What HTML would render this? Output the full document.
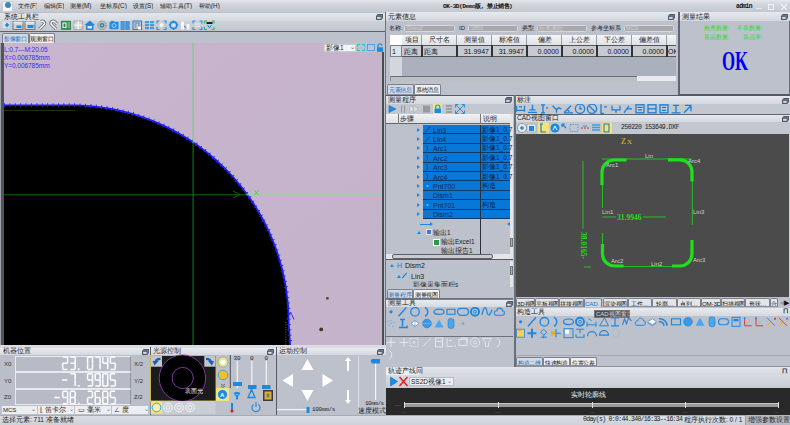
<!DOCTYPE html>
<html><head><meta charset="utf-8">
<style>
*{box-sizing:border-box;margin:0;padding:0}
html,body{width:790px;height:425px;overflow:hidden}
body{position:relative;background:#bcc1cc;font-family:"Liberation Sans",sans-serif;font-size:7px;color:#111}
.a{position:absolute}
.tb{position:absolute;background:linear-gradient(#eceef2,#d3d7de);font-size:7px;line-height:8px;padding-left:3px;color:#222;white-space:nowrap;overflow:hidden}
.pn{position:absolute;background:#bcc1cc}
.dk{position:absolute;background:#5a5f6b}
.t{position:absolute;white-space:nowrap;line-height:1}
.tab{position:absolute;background:#dfe2e8;border:1px solid #7c818c;border-bottom:none;font-size:6.2px;line-height:9px;text-align:center;color:#111;letter-spacing:-0.2px;border-radius:2px 2px 0 0;white-space:nowrap;overflow:hidden}
.tab.on{background:#d5dae1 !important;color:#1a6fc4}
.ic{position:absolute;width:9px;height:9px}
</style></head><body>

<!-- ===== MENU BAR ===== -->
<div class="a" style="left:0;top:0;width:790px;height:12px;background:linear-gradient(#e3e6eb 0%,#d0d4db 40%,#c3c7cf 100%)"></div>
<div class="a" style="left:2px;top:1px;width:11px;height:11px;background:#f4f6f8;border:1px solid #c9ced6"></div>
<div class="a" style="left:5px;top:2px;width:6px;height:6px;border-radius:3px;background:#3d86b8"></div>
<div class="t" style="left:18px;top:3px;width:19px;font-size:6.3px;color:#222;overflow:hidden">文件(F)</div><div class="t" style="left:44px;top:3px;width:20px;font-size:6.3px;color:#222;overflow:hidden">编辑(E)</div><div class="t" style="left:70px;top:3px;width:25px;font-size:6.3px;color:#222;overflow:hidden">测量(M)</div><div class="t" style="left:100px;top:3px;width:27px;font-size:6.3px;color:#222;overflow:hidden">坐标系(C)</div><div class="t" style="left:133px;top:3px;width:20px;font-size:6.3px;color:#222;overflow:hidden">设置(S)</div><div class="t" style="left:160px;top:3px;width:33px;font-size:6.3px;color:#222;overflow:hidden">辅助工具(T)</div><div class="t" style="left:199px;top:3px;width:21px;font-size:6.3px;color:#222;overflow:hidden">帮助(H)</div>
<div class="t" style="left:443px;top:3.5px;font-size:6.2px;color:#111;font-family:'Liberation Mono',monospace;font-weight:bold;letter-spacing:-0.5px">OK-3D(Demo版, 禁止销售)</div>
<div class="t" style="left:736px;top:3.5px;font-size:6.3px;color:#111;font-family:'Liberation Mono',monospace;font-weight:bold;letter-spacing:-0.6px">admin</div>
<div class="a" style="left:755.5px;top:8px;width:6px;height:1px;background:#e8eaee"></div>
<div class="a" style="left:768px;top:4px;width:6px;height:5.5px;border:1px solid #f0f2f4;border-top-width:1.5px"></div>
<svg class="a" style="left:780px;top:3px" width="8" height="8"><path d="M1,1 L7,7 M7,1 L1,7" stroke="#f0f2f4" stroke-width="1.2"/></svg>


<!-- ===== LEFT PANEL ===== -->
<div class="a" style="left:0;top:12.5px;width:386px;height:8.5px;background:linear-gradient(#e3e6ea,#d6d9df)"></div><div class="a" style="left:0;top:21px;width:386px;height:10.5px;background:linear-gradient(#cdd1d8,#c1c5cd)"></div>
<div class="t" style="left:4px;top:13px;font-size:7px;color:#222">系统工具栏</div>
<svg class="a" style="left:376.0px;top:14.0px" width="7" height="6" viewBox="0 0 7 6"><path d="M1.8,1.2 V0.6 H6.4 V4 H5.6" fill="none" stroke="#4a5566" stroke-width="1.1"/><rect x="0.6" y="2" width="4.6" height="3.4" fill="none" stroke="#4a5566" stroke-width="1.1"/><rect x="0.6" y="1.6" width="4.6" height="1" fill="#4a5566"/></svg>

<svg class="a" style="left:0;top:19px" width="220" height="12" viewBox="0 19 220 12">
<rect x="2" y="21" width="8" height="7.5" fill="#dde0e6" stroke="#b8bcc4" stroke-width="0.5"/><path d="M7,22.5 l2.2,2.5 l-2.2,2.5 l-2.2,-2.5z" fill="#1e88e0"/>
<rect x="13" y="21.5" width="10" height="8" fill="#cfd3da" stroke="#5a606a" stroke-width="0.8"/><rect x="13.5" y="21.5" width="9" height="2" fill="#e6e8ec"/><rect x="16.5" y="25.5" width="5" height="2.5" fill="#1e88e0"/>
<rect x="25" y="21.5" width="10" height="8" fill="#cfd3da" stroke="#5a606a" stroke-width="0.8"/><rect x="25.5" y="21.5" width="9" height="2" fill="#e6e8ec"/><rect x="27.5" y="25" width="6" height="3" fill="#1e88e0"/>
<path d="M39.5,29 L44.5,24 A2.3,2.3 0 0 0 41,21.5" fill="none" stroke="#5a5f68" stroke-width="3"/><path d="M39.5,29 L44.5,24 A2.3,2.3 0 0 0 41,21.5" fill="none" stroke="#f2f4f6" stroke-width="1.6"/>
<path d="M56,29 L51,24 A2.3,2.3 0 0 1 54.5,21.5 L57,24" fill="none" stroke="#5a5f68" stroke-width="3"/><path d="M56,29 L51,24 A2.3,2.3 0 0 1 54.5,21.5 L57,24" fill="none" stroke="#f2f4f6" stroke-width="1.6"/>
<rect x="61" y="20.8" width="10" height="9" fill="#2a8a4a"/><rect x="62.5" y="22.5" width="4" height="5.5" fill="#fff"/><rect x="63.5" y="23.5" width="2" height="3.5" fill="#2a8a4a"/><path d="M67.5,23 h2.5 M67.5,25 h2.5 M67.5,27 h2.5" stroke="#cfe8d8" stroke-width="0.8"/>
<rect x="74" y="21" width="8.5" height="8.5" fill="#d0d4da" stroke="#8a8f98" stroke-width="0.6"/><path d="M78.2,21 v8.5 M74,25.2 h8.5" stroke="#fff" stroke-width="1"/>
<path d="M89.8,20.5 L95,25 L93.5,25 L93.5,30 L86,30 L86,25 L84.6,25 Z" fill="#1e88e0"/><rect x="87.5" y="26" width="4.5" height="2.5" fill="#dbe8f5"/>
<circle cx="102" cy="25.3" r="4.3" fill="#b9bdc4" stroke="#6c7078" stroke-width="0.8" stroke-dasharray="1.2 0.8"/><circle cx="102" cy="25.3" r="2.4" fill="#3c8a98"/><circle cx="102" cy="25.3" r="0.8" fill="#ddd"/>
<rect x="109.5" y="21.8" width="9" height="7.4" rx="0.8" fill="#1e8cf0"/><rect x="111" y="20.9" width="3" height="1.5" fill="#1e8cf0"/><circle cx="114" cy="25.5" r="2" fill="none" stroke="#cfe6fb" stroke-width="0.8"/>
<g fill="#3e9ae0"><rect x="120.5" y="21" width="4" height="4"/><rect x="125.8" y="21" width="4" height="4"/><rect x="120.5" y="26" width="4" height="4"/><rect x="125.8" y="26" width="4" height="4"/></g><path d="M125.2,21 v9 M120.5,25.5 h9" stroke="#5a606a" stroke-width="0.6"/>
<rect x="133" y="21" width="8.5" height="8.5" fill="none" stroke="#2a78c8" stroke-width="1"/><path d="M134.5,23 h5.5 M134.5,25 h2 M138,25 h2 M134.5,27 h2" stroke="#2a78c8" stroke-width="0.9"/><rect x="138" y="27" width="3" height="2.5" fill="#fff"/>
<g fill="#4a9ad8"><rect x="145" y="21" width="4" height="2.2"/><rect x="150" y="21" width="4" height="2.2"/><rect x="145" y="24" width="4" height="2.2"/><rect x="150" y="24" width="4" height="2.2"/><rect x="145" y="27" width="4" height="2.2"/><rect x="150" y="27" width="4" height="2.2"/></g>
<path d="M157,23.5 v-2.5 h2.5 M163.5,21 h2.5 v2.5 M166,27 v2.5 h-2.5 M159.5,29.5 h-2.5 v-2.5" fill="none" stroke="#2a90e0" stroke-width="1.1"/><path d="M161.5,22.8 l2.2,2.4 l-2.2,2.4 l-2.2,-2.4z" fill="#fff"/>
<circle cx="173.5" cy="25.2" r="3.3" fill="none" stroke="#1e88e0" stroke-width="1.6"/><path d="M173.5,20.5 v2 M173.5,28 v2 M168.8,25.2 h2 M176.3,25.2 h2" stroke="#1e88e0" stroke-width="1.3"/><circle cx="173.5" cy="25.2" r="1" fill="#fff"/>
<rect x="181" y="21.5" width="3" height="8" fill="#f6f6f6"/><rect x="186.5" y="24" width="3" height="5.5" fill="#f6f6f6"/><path d="M184,26 l2.5,2" stroke="#2a60a0" stroke-width="0.8"/>
<path d="M193,23.5 v-2.5 h2.5 M199.5,21 h2.5 v2.5 M202,27 v2.5 h-2.5 M195.5,29.5 h-2.5 v-2.5" fill="none" stroke="#2a90e0" stroke-width="1.1"/><path d="M195,24 h5 M195,26.5 h5" stroke="#e8eef6" stroke-width="1"/>
<path d="M204.5,23.5 v-2.5 h2.5 M211.5,21 h2.5 v2.5 M214,27 v2.5 h-2.5 M207,29.5 h-2.5 v-2.5" fill="none" stroke="#22c060" stroke-width="1.1"/><rect x="206.5" y="22" width="6" height="2" fill="#222"/><path d="M207.5,25 l2,3 l2,-3" fill="none" stroke="#1e88e0" stroke-width="1"/>
</svg>
<div class="a" style="left:0;top:31px;width:386px;height:1.3px;background:#5d626d"></div>
<div class="a" style="left:0;top:32px;width:386px;height:11px;background:#bcc1cc"></div>
<div class="tab on" style="left:2px;top:33px;width:27px;height:10px">影像窗口</div>
<div class="tab" style="left:29px;top:33px;width:26px;height:10px;background:#eef0f3">观测窗口</div>
<!-- image -->
<div class="a" style="left:0;top:43px;width:4px;height:303px;background:#9da2ad"></div>
<div class="a" style="left:1px;top:43px;width:3px;height:303px;background:#505560"></div>
<svg class="a" style="left:4px;top:43px" width="378" height="302" viewBox="4 43 378 302">
<defs><linearGradient id="pk" x1="0" y1="0" x2="1" y2="1"><stop offset="0" stop-color="#c9b5cd"/><stop offset="1" stop-color="#c3b3cb"/></linearGradient></defs>
<rect x="4" y="43" width="378" height="302" fill="url(#pk)"/>
<path d="M4,105.8 L72.1,105.8 A216.2,216.2 0 0 1 288.3,322 L289.8,345 L4,345 Z" fill="#000"/>
<path d="M4,105.3 L72.1,105.3 A216.65,216.65 0 0 1 288.75,322 L290.2,345" fill="none" stroke="#1a1aff" stroke-width="1.6"/>
<path d="M4,105.3 L72.1,105.3 A216.65,216.65 0 0 1 288.75,322 L290.2,345" fill="none" stroke="#2020f0" stroke-width="4" stroke-dasharray="0.9 4.5"/>
<path d="M4,110.5 L75,110.5" stroke="#2a3a10" stroke-width="0.8"/>
<line x1="193.1" y1="43" x2="193.1" y2="143" stroke="#70d070" stroke-width="1"/><line x1="193.1" y1="143" x2="193.1" y2="345" stroke="#0a8a0a" stroke-width="1"/>
<line x1="4" y1="194.8" x2="246" y2="194.8" stroke="#0a7a0a" stroke-width="0.9"/>
<line x1="246" y1="194.8" x2="382" y2="194.8" stroke="#96d896" stroke-width="0.9"/>
<path d="M233,191 L240,194.5 L233,198" fill="none" stroke="#0c7a0c" stroke-width="0.8"/>
<path d="M254.5,190.5 L258.5,195 M258.5,190.5 L254.5,195" stroke="#40d040" stroke-width="0.9"/>
<circle cx="327.4" cy="298.3" r="1.4" fill="#4a4a28"/>
<circle cx="321.2" cy="329.4" r="1.9" fill="#3a3a20"/>
<path d="M287,319.5 L290.5,312 L294,319.5" fill="none" stroke="#2020f0" stroke-width="0.9"/>
<line x1="285.9" y1="322" x2="285.9" y2="345" stroke="#5a6a50" stroke-width="0.8" stroke-dasharray="1.2 1.2"/>
</svg>
<div class="t" style="left:4px;top:45.5px;font-size:6.6px;color:#3030f0;line-height:8.2px;letter-spacing:-0.1px">L:0.7---M:20.05<br>X=0.006785mm<br>Y=0.006785mm</div>
<div class="a" style="left:323px;top:43px;width:61px;height:9px;background:#bcc1cc"></div>
<div class="a" style="left:324px;top:43.5px;width:32px;height:8px;background:#f2f3f5;border:1px solid #c8ccd3"></div>
<div class="t" style="left:326px;top:44.5px;font-size:6.5px;color:#222">影像1</div>
<div class="t" style="left:350px;top:44px;font-size:6px;color:#555">⌄</div>
<div class="a" style="left:357px;top:44px;width:8px;height:7px;border:1px dashed #2cc0f0"></div>
<div class="a" style="left:367px;top:44px;width:8px;height:7px;border:1px solid #5ba0d8;background:#b9c8d8"></div>
<svg class="a" style="left:376px;top:43px" width="8" height="9"><path d="M2,4.5 V2.8 A2,2 0 0 1 6,2.8" fill="none" stroke="#1e88e0" stroke-width="1.2"/><rect x="1" y="4.3" width="6" height="4.5" fill="#1e88e0"/></svg>
<div class="a" style="left:382px;top:52px;width:2px;height:293px;background:#484c55"></div>
<div class="a" style="left:384px;top:32px;width:2px;height:314px;background:#bcc1cc"></div>
<div class="a" style="left:385px;top:12px;width:1px;height:334px;background:#6d727d"></div>


<!-- ===== CENTER TOP: element info ===== -->
<div class="a" style="left:386px;top:12px;width:292px;height:9px;background:linear-gradient(#e6e9ee,#d3d7de)"></div>
<div class="t" style="left:388px;top:13px;font-size:7px;color:#222">元素信息</div>
<div class="t" style="left:389px;top:25px;font-size:6px;color:#222">名称:</div>
<div class="a" style="left:404px;top:24.5px;width:51px;height:7.5px;background:#a8aab0;border:1px solid #d5d7db;border-radius:1.5px"></div><div class="t" style="left:407px;top:25.8px;font-size:5.5px;color:#cfd1d4">Dism2</div>
<div class="t" style="left:459px;top:25px;font-size:6px;color:#222">ID</div>
<div class="a" style="left:468px;top:24.5px;width:50px;height:7.5px;background:#a8aab0;border:1px solid #d5d7db;border-radius:1.5px"></div><div class="t" style="left:471px;top:25.8px;font-size:5.5px;color:#cfd1d4">2850</div>
<div class="t" style="left:522px;top:25px;font-size:6px;color:#222">类型</div>
<div class="a" style="left:536.5px;top:24.5px;width:50.5px;height:7.5px;background:#a8aab0;border:1px solid #d5d7db;border-radius:1.5px"></div><div class="t" style="left:539px;top:25.8px;font-size:5.5px;color:#cfd1d4">距离测距</div>
<div class="t" style="left:591px;top:25px;font-size:6px;color:#222">参考坐标系</div>
<div class="a" style="left:623.7px;top:24.5px;width:50.6px;height:7.5px;background:#a8aab0;border:1px solid #d5d7db;border-radius:1.5px"></div><div class="t" style="left:626px;top:25.8px;font-size:5.5px;color:#cfd1d4">MCS</div>
<!-- table -->
<div class="a" style="left:390px;top:35px;width:286px;height:45px;background:#aab0bd"></div>
<div class="a" style="left:390px;top:35px;width:12px;height:10px;background:#fff"></div>
<div class="a" style="left:390px;top:45px;width:12px;height:12px;background:#dfe2e8;border:1px solid #7a7f8a"></div>
<div class="t" style="left:392px;top:48px;font-size:7px">1</div>
<div class="a" style="left:402px;top:35px;width:274px;height:10px;background:linear-gradient(#f3f4f6,#dfe2e7)"></div>
<div class="a" style="left:402px;top:45px;width:274px;height:12px;background:#c6cad3;border-top:1px solid #555;border-bottom:1px solid #555"></div>
<div class="a" style="left:390px;top:57px;width:12px;height:19px;background:#d3d6dc"></div>
<div class="a" style="left:390px;top:76px;width:286px;height:5px;background:#e8eaee"></div>
<div class="a" style="left:390px;top:76px;width:247px;height:4.5px;background:#bdbfc2;border-top:1px solid #6a6e76;border-left:1px solid #8a8e96"></div>
<div class="a" style="left:421px;top:35px;width:1px;height:10px;background:#9aa0aa"></div><div class="t" style="left:402px;top:37px;width:20px;text-align:center;font-size:6.5px;color:#222">项目</div><div class="a" style="left:421px;top:45px;width:1.5px;height:12px;background:#333"></div><div class="t" style="left:404px;top:48px;font-size:7px;color:#111">距离</div><div class="a" style="left:456px;top:35px;width:1px;height:10px;background:#9aa0aa"></div><div class="t" style="left:422px;top:37px;width:35px;text-align:center;font-size:6.5px;color:#222">尺寸名</div><div class="a" style="left:456px;top:45px;width:1.5px;height:12px;background:#333"></div><div class="t" style="left:424px;top:48px;font-size:7px;color:#111">距离</div><div class="a" style="left:491px;top:35px;width:1px;height:10px;background:#9aa0aa"></div><div class="t" style="left:457px;top:37px;width:35px;text-align:center;font-size:6.5px;color:#222">测量值</div><div class="a" style="left:491px;top:45px;width:1.5px;height:12px;background:#333"></div><div class="t" style="left:457px;top:48px;width:32px;text-align:right;font-size:7px;color:#111">31.9947</div><div class="a" style="left:526px;top:35px;width:1px;height:10px;background:#9aa0aa"></div><div class="t" style="left:492px;top:37px;width:35px;text-align:center;font-size:6.5px;color:#222">标准值</div><div class="a" style="left:526px;top:45px;width:1.5px;height:12px;background:#333"></div><div class="t" style="left:492px;top:48px;width:32px;text-align:right;font-size:7px;color:#111">31.9947</div><div class="a" style="left:561px;top:35px;width:1px;height:10px;background:#9aa0aa"></div><div class="t" style="left:527px;top:37px;width:35px;text-align:center;font-size:6.5px;color:#222">偏差</div><div class="a" style="left:561px;top:45px;width:1.5px;height:12px;background:#333"></div><div class="t" style="left:527px;top:48px;width:32px;text-align:right;font-size:7px;color:#111">0.0000</div><div class="a" style="left:596px;top:35px;width:1px;height:10px;background:#9aa0aa"></div><div class="t" style="left:562px;top:37px;width:35px;text-align:center;font-size:6.5px;color:#222">上公差</div><div class="a" style="left:596px;top:45px;width:1.5px;height:12px;background:#333"></div><div class="t" style="left:562px;top:48px;width:32px;text-align:right;font-size:7px;color:#111">0.0000</div><div class="a" style="left:631px;top:35px;width:1px;height:10px;background:#9aa0aa"></div><div class="t" style="left:597px;top:37px;width:35px;text-align:center;font-size:6.5px;color:#222">下公差</div><div class="a" style="left:631px;top:45px;width:1.5px;height:12px;background:#333"></div><div class="t" style="left:597px;top:48px;width:32px;text-align:right;font-size:7px;color:#111">0.0000</div><div class="a" style="left:666px;top:35px;width:1px;height:10px;background:#9aa0aa"></div><div class="t" style="left:632px;top:37px;width:35px;text-align:center;font-size:6.5px;color:#222">偏差值</div><div class="a" style="left:666px;top:45px;width:1.5px;height:12px;background:#333"></div><div class="t" style="left:632px;top:48px;width:32px;text-align:right;font-size:7px;color:#111">0.0000</div><div class="a" style="left:699px;top:35px;width:1px;height:10px;background:#9aa0aa"></div><div class="t" style="left:667px;top:37px;width:33px;text-align:center;font-size:6.5px;color:#222">结果</div><div class="a" style="left:699px;top:45px;width:1.5px;height:12px;background:#333"></div><div class="t" style="left:668px;top:48px;font-size:7px;color:#111">OK</div>
<div class="a" style="left:676px;top:21px;width:4px;height:73px;background:#bcc1cc"></div>
<div class="a" style="left:678px;top:12px;width:1.5px;height:82px;background:#5f6470"></div>
<svg class="a" style="left:668.0px;top:14.0px" width="7" height="6" viewBox="0 0 7 6"><path d="M1.8,1.2 V0.6 H6.4 V4 H5.6" fill="none" stroke="#4a5566" stroke-width="1.1"/><rect x="0.6" y="2" width="4.6" height="3.4" fill="none" stroke="#4a5566" stroke-width="1.1"/><rect x="0.6" y="1.6" width="4.6" height="1" fill="#4a5566"/></svg>
<!-- result panel -->
<div class="a" style="left:679.5px;top:21px;width:110.5px;height:73px;background:#bcc1cc"></div>
<div class="a" style="left:680px;top:12px;width:110px;height:9px;background:linear-gradient(#e6e9ee,#d3d7de)"></div>
<div class="t" style="left:682px;top:13px;font-size:7px;color:#222">测量结果</div>
<svg class="a" style="left:781.0px;top:14.0px" width="7" height="6" viewBox="0 0 7 6"><path d="M1.8,1.2 V0.6 H6.4 V4 H5.6" fill="none" stroke="#4a5566" stroke-width="1.1"/><rect x="0.6" y="2" width="4.6" height="3.4" fill="none" stroke="#4a5566" stroke-width="1.1"/><rect x="0.6" y="1.6" width="4.6" height="1" fill="#4a5566"/></svg>
<div class="t" style="left:703.5px;top:25px;font-size:6.2px;color:#20e020">检查数量:</div><div class="t" style="left:737px;top:25px;font-size:6.2px;color:#20e020">不良数量:</div>
<div class="t" style="left:703.5px;top:34px;font-size:6.2px;color:#20e020">良品数量:</div><div class="t" style="left:743px;top:34px;font-size:6.2px;color:#20e020">良品率:</div>
<div class="t" style="left:721.5px;top:46.5px;font-size:28px;color:#0000ee;font-family:'Liberation Serif',serif;font-weight:bold;transform:scaleX(0.6);transform-origin:left top">OK</div>
<div class="a" style="left:788.5px;top:21px;width:1.5px;height:73px;background:#6a6f7a"></div>
<div class="a" style="left:386px;top:93.5px;width:404px;height:1.5px;background:#555a66"></div>
<!-- tabs element info/system msg -->
<div class="a" style="left:386px;top:81px;width:292px;height:14px;background:#bcc1cc"></div>
<div class="tab on" style="left:387px;top:84px;width:27px;height:10.5px;border-bottom:1px solid #8c919c">元素信息</div>
<div class="tab" style="left:414px;top:84px;width:27px;height:10.5px;background:#eef0f3;border-bottom:1px solid #8c919c">系统消息</div>


<!-- ===== MEASUREMENT PROGRAM ===== -->
<div class="a" style="left:386px;top:95px;width:127px;height:9px;background:linear-gradient(#e6e9ee,#d3d7de)"></div>
<div class="t" style="left:388px;top:96px;font-size:7px;color:#222">测量程序</div>
<svg class="a" style="left:505.0px;top:97.0px" width="7" height="6" viewBox="0 0 7 6"><path d="M1.8,1.2 V0.6 H6.4 V4 H5.6" fill="none" stroke="#4a5566" stroke-width="1.1"/><rect x="0.6" y="2" width="4.6" height="3.4" fill="none" stroke="#4a5566" stroke-width="1.1"/><rect x="0.6" y="1.6" width="4.6" height="1" fill="#4a5566"/></svg>
<div class="a" style="left:386px;top:104px;width:127px;height:10px;background:#c3c7d0"></div>
<svg class="a" style="left:386px;top:104px" width="127" height="10" viewBox="386 104 127 10">
<path d="M389,105.5 L396,109 L389,112.5 Z" fill="#1a8de8" stroke="#0d6ab8" stroke-width="0.5"/>
<rect x="401" y="105.5" width="1.2" height="7" fill="#999"/><rect x="404" y="105.5" width="1.2" height="7" fill="#999"/>
<path d="M410,105.5 L414,109 L410,112.5Z M414,105.5 L418,109 L414,112.5Z" fill="#e4e6ea" stroke="#999" stroke-width="0.4"/>
<rect x="423" y="105.5" width="7" height="7" fill="#999"/>
<rect x="433" y="104" width="9" height="10" fill="#f4e27a"/>
<rect x="434.5" y="108.5" width="6.5" height="4.5" fill="#1e8ae6"/><path d="M435.8,108.5 V107 A2,2 0 0 1 439.8,107 V108.5" fill="none" stroke="#1e8ae6" stroke-width="1.2"/>
<path d="M446,106 H452 M446,109 H452 M446,112 H452" stroke="#777" stroke-width="1"/>
<path d="M455.5,107.5 v-3 h3 M461.5,104.5 h3 v3 M464.5,110.5 v3 h-3 M458.5,113.5 h-3 v-3 M456,105 L464,113 M464,105 L456,113" fill="none" stroke="#2a90d8" stroke-width="1"/>
</svg>
<div class="a" style="left:386px;top:114px;width:127px;height:146px;background:#bcc1cc"></div>
<div class="a" style="left:386px;top:114px;width:124px;height:10px;background:linear-gradient(#f1f2f4,#dcdfe5);border-bottom:1px solid #666"></div>
<div class="a" style="left:397.5px;top:114px;width:1px;height:10px;background:#777"></div>
<div class="a" style="left:480px;top:114px;width:1px;height:10px;background:#777"></div>
<div class="t" style="left:400px;top:116px;font-size:6.5px;color:#222">步骤</div>
<div class="t" style="left:483px;top:116px;font-size:6.5px;color:#222">说明</div>
<div class="a" style="left:510px;top:114px;width:3px;height:146px;background:#e3e5e9"></div>
<div class="a" style="left:510.3px;top:238px;width:2.5px;height:9px;background:#a8acb4;border:0.5px solid #777"></div>
<div class="a" style="left:422.8px;top:125.0px;width:87.2px;height:9.4px;background:#0878d8;border-bottom:1px solid #0c3c6c"></div><div class="t" style="left:433px;top:126.5px;font-size:7px;color:#0a2a55">Lin3</div><div class="t" style="left:482px;top:126.5px;font-size:6.5px;color:#0a2040">影像1_0.7</div><div class="a" style="left:417px;top:127.5px;width:0;height:0;border-left:3.5px solid #1a8ae8;border-top:2.5px solid transparent;border-bottom:2.5px solid transparent"></div><div class="a" style="left:422.8px;top:134.4px;width:87.2px;height:9.4px;background:#0878d8;border-bottom:1px solid #0c3c6c"></div><div class="t" style="left:433px;top:135.9px;font-size:7px;color:#0a2a55">Lin4</div><div class="t" style="left:482px;top:135.9px;font-size:6.5px;color:#0a2040">影像1_0.7</div><div class="a" style="left:417px;top:136.9px;width:0;height:0;border-left:3.5px solid #1a8ae8;border-top:2.5px solid transparent;border-bottom:2.5px solid transparent"></div><div class="a" style="left:422.8px;top:143.8px;width:87.2px;height:9.4px;background:#0878d8;border-bottom:1px solid #0c3c6c"></div><div class="t" style="left:433px;top:145.3px;font-size:7px;color:#0a2a55">Arc1</div><div class="t" style="left:482px;top:145.3px;font-size:6.5px;color:#0a2040">影像1_0.7</div><div class="a" style="left:417px;top:146.3px;width:0;height:0;border-left:3.5px solid #1a8ae8;border-top:2.5px solid transparent;border-bottom:2.5px solid transparent"></div><div class="a" style="left:422.8px;top:153.2px;width:87.2px;height:9.4px;background:#0878d8;border-bottom:1px solid #0c3c6c"></div><div class="t" style="left:433px;top:154.7px;font-size:7px;color:#0a2a55">Arc2</div><div class="t" style="left:482px;top:154.7px;font-size:6.5px;color:#0a2040">影像1_0.7</div><div class="a" style="left:417px;top:155.7px;width:0;height:0;border-left:3.5px solid #1a8ae8;border-top:2.5px solid transparent;border-bottom:2.5px solid transparent"></div><div class="a" style="left:422.8px;top:162.6px;width:87.2px;height:9.4px;background:#0878d8;border-bottom:1px solid #0c3c6c"></div><div class="t" style="left:433px;top:164.1px;font-size:7px;color:#0a2a55">Arc3</div><div class="t" style="left:482px;top:164.1px;font-size:6.5px;color:#0a2040">影像1_0.7</div><div class="a" style="left:417px;top:165.1px;width:0;height:0;border-left:3.5px solid #1a8ae8;border-top:2.5px solid transparent;border-bottom:2.5px solid transparent"></div><div class="a" style="left:422.8px;top:172.0px;width:87.2px;height:9.4px;background:#0878d8;border-bottom:1px solid #0c3c6c"></div><div class="t" style="left:433px;top:173.5px;font-size:7px;color:#0a2a55">Arc4</div><div class="t" style="left:482px;top:173.5px;font-size:6.5px;color:#0a2040">影像1_0.7</div><div class="a" style="left:417px;top:174.5px;width:0;height:0;border-left:3.5px solid #1a8ae8;border-top:2.5px solid transparent;border-bottom:2.5px solid transparent"></div><div class="a" style="left:422.8px;top:181.4px;width:87.2px;height:9.4px;background:#0878d8;border-bottom:1px solid #0c3c6c"></div><div class="t" style="left:433px;top:182.9px;font-size:7px;color:#0a2a55">Pnt700</div><div class="t" style="left:482px;top:182.9px;font-size:6.5px;color:#0a2040">构造</div><div class="a" style="left:417px;top:183.9px;width:0;height:0;border-left:3.5px solid #1a8ae8;border-top:2.5px solid transparent;border-bottom:2.5px solid transparent"></div><div class="a" style="left:422.8px;top:190.8px;width:87.2px;height:9.4px;background:#0878d8;border-bottom:1px solid #0c3c6c"></div><div class="t" style="left:433px;top:192.3px;font-size:7px;color:#0a2a55">Dism1</div><div class="a" style="left:417px;top:193.3px;width:0;height:0;border-left:3.5px solid #1a8ae8;border-top:2.5px solid transparent;border-bottom:2.5px solid transparent"></div><div class="a" style="left:422.8px;top:200.2px;width:87.2px;height:9.4px;background:#0878d8;border-bottom:1px solid #0c3c6c"></div><div class="t" style="left:433px;top:201.7px;font-size:7px;color:#0a2a55">Pnt701</div><div class="t" style="left:482px;top:201.7px;font-size:6.5px;color:#0a2040">构造</div><div class="a" style="left:417px;top:202.7px;width:0;height:0;border-left:3.5px solid #1a8ae8;border-top:2.5px solid transparent;border-bottom:2.5px solid transparent"></div><div class="a" style="left:422.8px;top:209.6px;width:87.2px;height:9.4px;background:#0878d8;border-bottom:1px solid #0c3c6c"></div><div class="t" style="left:433px;top:211.1px;font-size:7px;color:#0a2a55">Dism2</div><div class="a" style="left:417px;top:212.1px;width:0;height:0;border-left:3.5px solid #1a8ae8;border-top:2.5px solid transparent;border-bottom:2.5px solid transparent"></div>
<svg class="a" style="left:422px;top:125px" width="12" height="95" viewBox="422 125 12 95" fill="none" stroke="#0a3a74" stroke-width="0.7"><path d="M425,132.7 L430,126.7"/><path d="M425,142.1 L430,136.1"/><path d="M426,145.5 A3.5,3.5 0 0 1 426,151.5"/><path d="M426,154.9 A3.5,3.5 0 0 1 426,160.9"/><path d="M426,164.3 A3.5,3.5 0 0 1 426,170.3"/><path d="M426,173.7 A3.5,3.5 0 0 1 426,179.7"/><circle cx="427.5" cy="186.1" r="1" fill="#7cc0ff" stroke="none"/><path d="M425,193.5 v4 M430,193.5 v4 M425,195.5 h5" stroke="#3a6ab4"/><circle cx="427.5" cy="204.9" r="1" fill="#7cc0ff" stroke="none"/><path d="M425,212.3 v4 M430,212.3 v4 M425,214.3 h5" stroke="#3a6ab4"/></svg>
<div class="a" style="left:480px;top:125px;width:1px;height:133px;background:#2a2f3a"></div>
<div class="a" style="left:420px;top:223.5px;width:12px;height:1px;background:#1a8ae8"></div>
<div class="a" style="left:430px;top:221.5px;width:0;height:0;border-left:3px solid #1a8ae8;border-top:2px solid transparent;border-bottom:2px solid transparent"></div>
<div class="a" style="left:507px;top:221.5px;width:0;height:0;border-right:3px solid #1a8ae8;border-top:2px solid transparent;border-bottom:2px solid transparent"></div>
<div class="a" style="left:417px;top:230.5px;width:0;height:0;border-bottom:3px solid #1a8ae8;border-left:2px solid transparent;border-right:2px solid transparent"></div>
<div class="a" style="left:426px;top:229px;width:6px;height:6px;background:#4a7cc0;border:1px solid #dde"></div>
<div class="t" style="left:433px;top:229.5px;font-size:6.5px;color:#222">输出1</div>
<div class="a" style="left:433px;top:238.5px;width:7px;height:7px;background:#2a9a4a;border:1px solid #fff"></div>
<div class="t" style="left:441px;top:239px;font-size:6.5px;color:#222">输出Excel1</div>
<div class="t" style="left:441px;top:248px;font-size:6.5px;color:#222">输出报告1</div>
<div class="a" style="left:386px;top:253.5px;width:124px;height:5.5px;background:#e3e5e9"></div>
<div class="a" style="left:392px;top:254px;width:101px;height:4.6px;background:#c9cbcf;border:1px solid #5d6068;border-radius:2px"></div>
<div class="a" style="left:386px;top:259.3px;width:127px;height:1.2px;background:#555a65"></div>
<!-- lower tree -->
<div class="a" style="left:386px;top:260.5px;width:127px;height:27px;background:#bcc1cc"></div>
<div class="a" style="left:390px;top:264px;width:0;height:0;border-bottom:3px solid #1a8ae8;border-left:2px solid transparent;border-right:2px solid transparent"></div>
<div class="t" style="left:397px;top:261.5px;font-size:7px;color:#1a7ad8">H</div>
<div class="t" style="left:405px;top:262px;font-size:7px;color:#222">Dism2</div>
<div class="a" style="left:397px;top:275px;width:0;height:0;border-bottom:3px solid #1a8ae8;border-left:2px solid transparent;border-right:2px solid transparent"></div>
<div class="a" style="left:404px;top:272px;width:1px;height:7px;background:#1a7ad8;transform:rotate(40deg)"></div>
<div class="t" style="left:411px;top:272.5px;font-size:7px;color:#222">Lin3</div>
<div class="t" style="left:413px;top:282px;font-size:6.5px;color:#333">影像采集面积s</div>
<div class="a" style="left:510px;top:261px;width:3px;height:26px;background:#e3e5e9"></div>
<div class="a" style="left:510.3px;top:266px;width:2.5px;height:9px;background:#a8acb4;border:0.5px solid #777"></div>
<div class="a" style="left:386px;top:287px;width:127px;height:11px;background:#bcc1cc"></div>
<div class="tab on" style="left:387px;top:288.5px;width:26px;height:10px;border-bottom:1px solid #8c919c">测量程序</div>
<div class="tab" style="left:413px;top:288.5px;width:27px;height:10px;background:#f0f2f5;border-bottom:1px solid #8c919c">测量视图</div>
<div class="a" style="left:513.9px;top:95px;width:2.2px;height:272px;background:#68707c"></div>


<!-- ===== CAD PANEL ===== -->
<div class="a" style="left:386px;top:94.8px;width:404px;height:1.2px;background:#555a66"></div>
<div class="a" style="left:516px;top:96px;width:274px;height:8px;background:linear-gradient(#e6e9ee,#d3d7de)"></div>
<div class="t" style="left:517px;top:96.5px;font-size:6.5px;color:#222">标注</div>
<svg class="a" style="left:782.0px;top:98.0px" width="7" height="6" viewBox="0 0 7 6"><path d="M1.8,1.2 V0.6 H6.4 V4 H5.6" fill="none" stroke="#4a5566" stroke-width="1.1"/><rect x="0.6" y="2" width="4.6" height="3.4" fill="none" stroke="#4a5566" stroke-width="1.1"/><rect x="0.6" y="1.6" width="4.6" height="1" fill="#4a5566"/></svg>
<div class="a" style="left:516px;top:104px;width:274px;height:10px;background:#c3c7d0"></div>
<svg class="a" style="left:514px;top:104px" width="180" height="10" viewBox="514 104 180 10" fill="none" stroke="#1d7fd6" stroke-width="1.3"><g transform="translate(515.5,103.8)"><path d="M1,2 v6 M9,2 v6 M1,6.5 h8 M3.5,3 h3"/></g><g transform="translate(527.5,103.8)"><path d="M0.5,8.5 h9 M5,1 v5 M2,6 h6"/></g><g transform="translate(540,103.8)"><path d="M3,0.5 v9 M1,1 h4 M1,9 h4 M6,4 h2"/></g><g transform="translate(552,103.8)"><path d="M0.5,2 l4,4 l2,-2 l3,1 M4.5,6 v3"/></g><g transform="translate(563.5,103.8)"><path d="M0.5,9 l7,-7 M0.5,9 h9 M4,6 l2,2"/></g><g transform="translate(575,103.8)"><circle cx="5" cy="5" r="4.6"/><path d="M5,2 v3 h2"/></g><g transform="translate(587,103.8)"><circle cx="5" cy="5" r="4.6"/><path d="M2,2 l6,6"/></g><g transform="translate(599,103.8)"><path d="M2,0.5 v9 h3 M5,3 h3"/></g><g transform="translate(611,103.8)"><path d="M1,2 v4 h8 v-4 M5,6 v3"/></g><g transform="translate(623,103.8)"><path d="M1,9 l5,-7 M4,5 h5"/></g><g transform="translate(635,103.8)"><rect x="1" y="1" width="8" height="8"/><path d="M2.5,3.5 h5 M3,6 h4"/></g><g transform="translate(647,103.8)"><rect x="1" y="1" width="8" height="8"/><path d="M1,5 h8"/></g><g transform="translate(659,103.8)"><rect x="1" y="1" width="8" height="8"/><path d="M3,3.5 h4 M3,6.5 h4"/></g><g transform="translate(671,103.8)"><path d="M0.5,9 h9 M5,9 v-7 M2,1.5 h6"/></g><g transform="translate(683,103.8)"><path d="M1,9 l7,-7 M2,1.5 h6 v6"/></g></svg>
<div class="a" style="left:516px;top:113.5px;width:274px;height:1px;background:#60656f"></div>
<div class="a" style="left:516px;top:114.5px;width:274px;height:7.5px;background:linear-gradient(#e6e9ee,#d3d7de)"></div>
<div class="t" style="left:517px;top:115px;font-size:6.5px;color:#222">CAD视图窗口</div>
<svg class="a" style="left:782.0px;top:116.0px" width="7" height="6" viewBox="0 0 7 6"><path d="M1.8,1.2 V0.6 H6.4 V4 H5.6" fill="none" stroke="#4a5566" stroke-width="1.1"/><rect x="0.6" y="2" width="4.6" height="3.4" fill="none" stroke="#4a5566" stroke-width="1.1"/><rect x="0.6" y="1.6" width="4.6" height="1" fill="#4a5566"/></svg>
<div class="a" style="left:516px;top:122px;width:274px;height:12px;background:#c3c7d0"></div>
<svg class="a" style="left:514px;top:122px" width="110" height="12" viewBox="514 122 110 12">
<circle cx="522" cy="128" r="4.5" fill="#e8eaee" stroke="#888" stroke-width="0.8"/><circle cx="522" cy="128" r="1.8" fill="#1e88e0"/>
<rect x="527" y="124" width="9" height="8" fill="#dfe3ea" stroke="#999" stroke-width="0.6"/><rect x="529" y="126" width="5" height="5" fill="#1e88e0"/>
<rect x="538" y="122.5" width="11" height="11" fill="#f4e27a"/><path d="M541,124 v8 h5 M540,124 h3" stroke="#1e70c0" stroke-width="1.1" fill="none"/>
<circle cx="555" cy="128" r="4.5" fill="#1e88e0"/><path d="M553,130 l2,-4 l2,4" stroke="#fff" stroke-width="1" fill="none"/>
<path d="M562,124 l4,4 M562,124 h3 M562,124 v3" stroke="#1e80d8" stroke-width="1.2" fill="none"/>
<rect x="570" y="124.5" width="8" height="7" fill="none" stroke="#4a90d0" stroke-width="0.8" stroke-dasharray="1.5 1"/>
<path d="M581,128 h8" stroke="#d03030" stroke-width="1" stroke-dasharray="2 1"/><path d="M583,126 h4" stroke="#3070d0" stroke-width="0.8"/>
<path d="M592,125 h8 M592,127.5 h8 M592,130 h8" stroke="#39a0e0" stroke-width="1.3"/>
<rect x="602" y="122.5" width="10" height="11" fill="#f4e27a"/><rect x="604" y="124" width="5" height="8" fill="none" stroke="#1e70c0" stroke-width="1"/>
</svg>
<div class="t" style="left:621px;top:125px;font-size:6.5px;color:#222;font-family:'Liberation Mono',monospace;letter-spacing:-0.5px">250220 153649.DXF</div>
<div class="a" style="left:516px;top:134px;width:272.5px;height:163px;background:#4b4b4b"></div>
<div class="a" style="left:788.5px;top:122px;width:1.5px;height:175px;background:#c9ccd3"></div>
<svg class="a" style="left:514px;top:134px" width="275" height="163" viewBox="514 134 275 163" font-family="Liberation Serif" >
<text x="621" y="143.5" font-size="8" fill="#e0c020">Z</text><text x="627" y="143.5" font-size="7" fill="#e0c020">X</text>
<g stroke="#22cc22" stroke-width="0.9" fill="none">
<line x1="602" y1="159" x2="692" y2="159"/>
<line x1="602.5" y1="170" x2="602.5" y2="208"/>
<line x1="602.5" y1="233" x2="602.5" y2="250"/>
<line x1="692.3" y1="170" x2="692.3" y2="225"/>
<line x1="615" y1="266.5" x2="680" y2="266.5"/>
<line x1="583" y1="161" x2="583" y2="229"/>
<line x1="584" y1="267" x2="591" y2="267"/>
<line x1="602.5" y1="217" x2="616" y2="217"/>
<line x1="643" y1="217" x2="666" y2="217"/>
</g>
<g stroke="#1ee01e" stroke-width="3.2" fill="none" stroke-linecap="butt">
<path d="M602,185 L602,172 A12,12 0 0 1 614,160 L626.5,160"/>
<path d="M668,159.8 L680,159.8 A12,12 0 0 1 692,171.8 L692,181.5"/>
<path d="M602.5,244 L602.5,254 A12,12 0 0 0 614.5,266 L623.6,266"/>
<path d="M692,240 L692,254 A12,12 0 0 1 680,266 L672,266"/>
</g>
<g font-size="6" fill="#d4d4c4" font-family="Liberation Sans">
<text x="606" y="167">Arc1</text>
<text x="645" y="157.5">Lin</text>
<text x="688" y="162.5">Arc4</text>
<text x="602" y="214">Lin1</text>
<text x="693" y="214">Lin3</text>
<text x="611" y="263">Arc2</text>
<text x="651" y="266">Lin2</text>
<text x="693" y="262">Arc3</text>
</g>
<text x="617" y="219.5" font-size="7.5" fill="#22dd22" font-weight="bold">31.9946</text>
<text transform="translate(580.5,232) rotate(90)" font-size="7.5" fill="#22dd22" font-weight="bold">38.0165-</text>
</svg>


<!-- ===== BOTTOM LEFT ===== -->
<div class="a" style="left:0;top:345px;width:386px;height:2.5px;background:#d9dce2"></div>
<!-- machine position -->
<div class="a" style="left:0;top:347.5px;width:149.5px;height:7px;background:linear-gradient(#e8ebef,#d5d9df)"></div>
<div class="t" style="left:3px;top:347.5px;font-size:6.5px;color:#222">机器位置</div>
<svg class="a" style="left:142.0px;top:349.0px" width="7" height="6" viewBox="0 0 7 6"><path d="M1.8,1.2 V0.6 H6.4 V4 H5.6" fill="none" stroke="#4a5566" stroke-width="1.1"/><rect x="0.6" y="2" width="4.6" height="3.4" fill="none" stroke="#4a5566" stroke-width="1.1"/><rect x="0.6" y="1.6" width="4.6" height="1" fill="#4a5566"/></svg>
<div class="a" style="left:0;top:354.5px;width:149.5px;height:52px;background:#b9bec9"></div>
<div class="a" style="left:15px;top:355.5px;width:116px;height:49.5px;background:#b9bec9"></div>
<div class="a" style="left:15px;top:355.5px;width:116px;height:16.5px;border:1px solid #e8eaef;border-right-color:#8f949e;background:#b6bbc6"></div><div class="t" style="left:4px;top:361.0px;font-size:6px;color:#333">X0</div><div class="t" style="left:134px;top:361.0px;font-size:6px;color:#333">X/2</div><div class="a" style="left:15px;top:372.0px;width:116px;height:16.5px;border:1px solid #e8eaef;border-right-color:#8f949e;background:#b6bbc6"></div><div class="t" style="left:4px;top:377.5px;font-size:6px;color:#333">Y0</div><div class="t" style="left:134px;top:377.5px;font-size:6px;color:#333">Y/2</div><div class="a" style="left:15px;top:388.5px;width:116px;height:16.5px;border:1px solid #e8eaef;border-right-color:#8f949e;background:#b6bbc6"></div><div class="t" style="left:4px;top:394.0px;font-size:6px;color:#333">Z0</div><div class="t" style="left:134px;top:394.0px;font-size:6px;color:#333">Z/2</div>
<svg class="a" style="left:0;top:350px" width="150" height="60" viewBox="0 350 150 60"><path d="M71.20,357.00L74.30,357.00M75.20,357.90L75.20,362.30M71.20,363.20L74.30,363.20M75.20,364.10L75.20,368.50M71.20,369.40L74.30,369.40M63.60,357.00L66.70,357.00M67.60,357.90L67.60,362.30M63.60,363.20L66.70,363.20M62.70,364.10L62.70,368.50M63.60,369.40L66.70,369.40M88.50,357.00L91.60,357.00M92.50,357.90L92.50,362.30M92.50,364.10L92.50,368.50M88.50,369.40L91.60,369.40M87.60,364.10L87.60,368.50M87.60,357.90L87.60,362.30M96.10,357.00L99.20,357.00M100.10,357.90L100.10,362.30M100.10,364.10L100.10,368.50M102.80,357.90L102.80,362.30M103.70,363.20L106.80,363.20M107.70,357.90L107.70,362.30M107.70,364.10L107.70,368.50M111.30,357.00L114.40,357.00M110.40,357.90L110.40,362.30M111.30,363.20L114.40,363.20M115.30,364.10L115.30,368.50M111.30,369.40L114.40,369.40M71.20,373.70L74.30,373.70M75.20,374.60L75.20,379.00M75.20,380.80L75.20,385.20M62.7,379.9L66.6,379.9M88.50,373.70L91.60,373.70M92.50,374.60L92.50,379.00M92.50,380.80L92.50,385.20M88.50,386.10L91.60,386.10M87.60,374.60L87.60,379.00M88.50,379.90L91.60,379.90M96.10,373.70L99.20,373.70M100.10,374.60L100.10,379.00M100.10,380.80L100.10,385.20M96.10,386.10L99.20,386.10M95.20,374.60L95.20,379.00M96.10,379.90L99.20,379.90M103.70,373.70L106.80,373.70M107.70,374.60L107.70,379.00M107.70,380.80L107.70,385.20M103.70,386.10L106.80,386.10M102.80,380.80L102.80,385.20M102.80,374.60L102.80,379.00M111.30,373.70L114.40,373.70M110.40,374.60L110.40,379.00M111.30,379.90L114.40,379.90M115.30,380.80L115.30,385.20M111.30,386.10L114.40,386.10M71.20,391.30L74.30,391.30M75.20,392.20L75.20,396.60M75.20,398.40L75.20,402.80M71.20,403.70L74.30,403.70M70.30,398.40L70.30,402.80M70.30,392.20L70.30,396.60M71.20,397.50L74.30,397.50M63.60,391.30L66.70,391.30M67.60,392.20L67.60,396.60M67.60,398.40L67.60,402.80M63.60,403.70L66.70,403.70M62.70,392.20L62.70,396.60M63.60,397.50L66.70,397.50M55.1,397.5L59.0,397.5M88.50,391.30L91.60,391.30M92.50,392.20L92.50,396.60M88.50,397.50L91.60,397.50M87.60,398.40L87.60,402.80M88.50,403.70L91.60,403.70M96.10,391.30L99.20,391.30M95.20,392.20L95.20,396.60M96.10,397.50L99.20,397.50M95.20,398.40L95.20,402.80M96.10,403.70L99.20,403.70M100.10,398.40L100.10,402.80M103.70,391.30L106.80,391.30M107.70,392.20L107.70,396.60M107.70,398.40L107.70,402.80M103.70,403.70L106.80,403.70M102.80,398.40L102.80,402.80M102.80,392.20L102.80,396.60M103.70,397.50L106.80,397.50M111.30,391.30L114.40,391.30M110.40,392.20L110.40,396.60M111.30,397.50L114.40,397.50M115.30,398.40L115.30,402.80M111.30,403.70L114.40,403.70" stroke="#ffffff" stroke-width="1.5" fill="none" stroke-linecap="square"/><rect x="77.8" y="368.4" width="1.8" height="1.8" fill="#fff"/><rect x="77.8" y="385.1" width="1.8" height="1.8" fill="#fff"/><rect x="77.8" y="402.7" width="1.8" height="1.8" fill="#fff"/></svg>
<div class="a" style="left:0;top:405.5px;width:149.5px;height:9px;background:#bcc1cc"></div>
<div class="a" style="left:2px;top:406px;width:35px;height:8px;background:#eceef1"></div><div class="t" style="left:3px;top:407px;font-size:6px;color:#222">MCS</div><div class="t" style="left:31px;top:406px;font-size:6px;color:#666">⌄</div>
<div class="a" style="left:38px;top:406px;width:36px;height:8px;background:#eceef1"></div><div class="t" style="left:40px;top:406.5px;font-size:6.5px;color:#222">⌊ 笛卡尔</div><div class="t" style="left:69px;top:406px;font-size:6px;color:#666">⌄</div>
<div class="a" style="left:75px;top:406px;width:36px;height:8px;background:#eceef1"></div><div class="t" style="left:78px;top:406.5px;font-size:6.5px;color:#222">▭ 毫米</div><div class="t" style="left:106px;top:406px;font-size:6px;color:#666">⌄</div>
<div class="a" style="left:112px;top:406px;width:36px;height:8px;background:#eceef1"></div><div class="t" style="left:114px;top:406.5px;font-size:6.5px;color:#222">∠ 度</div><div class="t" style="left:144px;top:406px;font-size:6px;color:#666">⌄</div>
<div class="a" style="left:149.5px;top:347px;width:1px;height:68px;background:#555a66"></div>
<!-- light control -->
<div class="a" style="left:150.5px;top:347.5px;width:125px;height:7px;background:linear-gradient(#e8ebef,#d5d9df)"></div>
<div class="t" style="left:153px;top:347.5px;font-size:6.5px;color:#222">光源控制</div>
<svg class="a" style="left:267.0px;top:349.0px" width="7" height="6" viewBox="0 0 7 6"><path d="M1.8,1.2 V0.6 H6.4 V4 H5.6" fill="none" stroke="#4a5566" stroke-width="1.1"/><rect x="0.6" y="2" width="4.6" height="3.4" fill="none" stroke="#4a5566" stroke-width="1.1"/><rect x="0.6" y="1.6" width="4.6" height="1" fill="#4a5566"/></svg>
<div class="a" style="left:150.5px;top:354.5px;width:125px;height:60px;background:#bcc1cc"></div>
<svg class="a" style="left:150px;top:354px" width="126" height="61" viewBox="150 354 126 61">
<rect x="150.5" y="355.5" width="65.5" height="45.5" fill="#1c1c1c" stroke="#d8c060" stroke-width="0.9"/>
<circle cx="182.4" cy="378.1" r="23.2" fill="#000" stroke="#8a3cb0" stroke-width="0.9"/>
<circle cx="182.7" cy="378" r="10.6" fill="none" stroke="#8a3cb0" stroke-width="0.9"/>
<rect x="151" y="356" width="11" height="10.7" fill="#c3c7cf"/>
<path d="M160.5,358.8 C157,358.8 155.5,360.5 155.5,362.5" fill="none" stroke="#1e5fb0" stroke-width="2.2"/>
<path d="M152.5,361 L158.5,361 L154.5,365.5 Z" fill="#1e5fb0"/>
<rect x="204.3" y="356" width="11.2" height="10.7" fill="#c3c7cf"/>
<path d="M206,358.8 C209.5,358.8 211,360.5 211,362.5" fill="none" stroke="#1e5fb0" stroke-width="2.2"/>
<path d="M214,361 L208,361 L212,365.5 Z" fill="#1e5fb0"/>
<text x="185" y="392.5" font-size="6" fill="#eee" font-family="Liberation Sans">表面光</text>
<rect x="150.5" y="401" width="65" height="13" fill="#c9cdd4"/>
<rect x="151" y="401.5" width="11" height="12" fill="#f4e27a"/>
<circle cx="156.5" cy="407.5" r="4.3" fill="#f6f0b0" stroke="#2ab0e0" stroke-width="1"/>
<g fill="none" stroke="#f4f5f7" stroke-width="1"><circle cx="168" cy="407.5" r="4.3"/><circle cx="179" cy="407.5" r="4.3"/><circle cx="190" cy="407.5" r="4.3"/><circle cx="168" cy="407.5" r="2"/><circle cx="179" cy="407.5" r="2"/><circle cx="190" cy="407.5" r="2"/></g>
<circle cx="223" cy="362" r="5" fill="#f0e080" stroke="#2aa8e0" stroke-width="0.9" stroke-dasharray="1 0.8"/><circle cx="223" cy="362" r="2.6" fill="#fff"/>
<circle cx="223" cy="375" r="4.8" fill="#f2c020" stroke="#38a8e8" stroke-width="1"/>
<path d="M221,384 l2,1.5 l2,-1.5 M221,386 l2,1.5 l2,-1.5" stroke="#333" stroke-width="0.6" fill="none"/>
<rect x="216" y="388" width="13" height="13" fill="#f4e27a"/>
<circle cx="222.5" cy="394.5" r="5" fill="#1e8ae6" stroke="#fff" stroke-width="0.6"/>
<text x="220" y="397" font-size="6" fill="#fff" font-weight="bold" font-family="Liberation Sans">A</text>
<line x1="230.3" y1="355" x2="230.3" y2="388" stroke="#404550" stroke-width="0.9"/>
<text x="233.5" y="360" font-size="6" fill="#222" font-family="Liberation Mono">30</text>
<text x="250" y="360" font-size="6" fill="#222" font-family="Liberation Mono">0</text>
<text x="264.5" y="360" font-size="6" fill="#222" font-family="Liberation Mono">0</text>
<rect x="236.7" y="361" width="1.2" height="27" fill="#f4f4f4"/>
<rect x="251.2" y="361" width="1.2" height="27" fill="#f4f4f4"/>
<rect x="265.7" y="361" width="1.2" height="27" fill="#f4f4f4"/>
<rect x="233" y="382" width="9" height="4" fill="#1e88e0"/>
<rect x="248" y="385" width="8.5" height="4" fill="#1e88e0"/>
<rect x="262" y="385" width="8.5" height="4" fill="#1e88e0"/>
<path d="M233.5,393 Q237,391 240.5,393 L238,396.5 V399.5 H236 V396.5 Z" fill="#1e88e0"/><path d="M236,394 l1,1 l1,-1" stroke="#fff" stroke-width="0.5" fill="none"/><g stroke="#e0c040" stroke-width="0.6"><path d="M232,391 l1,1 M237,389.5 v1 M242,391 l-1,1"/></g>
<path d="M251.5,389.5 L255,397.5 H248 Z" fill="none" stroke="#1e88e0" stroke-width="1.3"/><rect x="250.7" y="389" width="1.6" height="3" fill="#1e88e0"/><g fill="#e0c040"><circle cx="247.5" cy="399" r="0.6"/><circle cx="255.5" cy="399" r="0.6"/><circle cx="251.5" cy="400" r="0.6"/><circle cx="246.5" cy="396" r="0.5"/><circle cx="256.5" cy="396" r="0.5"/></g>
<rect x="263" y="390" width="10" height="11" fill="#3a3a3a"/><rect x="264.5" y="391.5" width="7" height="8" fill="#d8b040"/><rect x="266.5" y="393.5" width="3" height="4" fill="#8a7a50"/>
<rect x="231" y="403" width="2" height="7" fill="#1e88e0"/><circle cx="232" cy="411" r="1.6" fill="#e02020"/>
<path d="M253.5,404.5 A4,4 0 1 0 258.5,404.5" fill="none" stroke="#1e88e0" stroke-width="1.1"/><line x1="256" y1="402" x2="256" y2="407" stroke="#1e88e0" stroke-width="1.1"/>
</svg>
<div class="a" style="left:275.5px;top:347px;width:1px;height:68px;background:#555a66"></div>
<!-- motion control -->
<div class="a" style="left:276.5px;top:347.5px;width:109px;height:7px;background:linear-gradient(#e8ebef,#d5d9df)"></div>
<div class="t" style="left:279px;top:347.5px;font-size:6.5px;color:#222">运动控制</div>
<svg class="a" style="left:377.0px;top:349.0px" width="7" height="6" viewBox="0 0 7 6"><path d="M1.8,1.2 V0.6 H6.4 V4 H5.6" fill="none" stroke="#4a5566" stroke-width="1.1"/><rect x="0.6" y="2" width="4.6" height="3.4" fill="none" stroke="#4a5566" stroke-width="1.1"/><rect x="0.6" y="1.6" width="4.6" height="1" fill="#4a5566"/></svg>
<div class="a" style="left:276.5px;top:354.5px;width:109px;height:60px;background:#bcc1cc"></div>
<svg class="a" style="left:276px;top:354px" width="110" height="61" viewBox="276 354 110 61">
<path d="M307.5,359 L313.5,370 L301.5,370Z" fill="#fff"/>
<path d="M282.5,380.5 L293,374 L293,387Z" fill="#fff"/>
<path d="M333,380.5 L322.5,374 L322.5,387Z" fill="#fff"/>
<path d="M307.5,401 L313.5,390 L301.5,390Z" fill="#fff"/>
<path d="M348,357 l3,4 h-2 v10 h-2 v-10 h-2z" fill="#fff"/>
<path d="M348,404 l3,-4 h-2 v-10 h-2 v10 h-2z" fill="#fff"/>
<line x1="358.6" y1="356" x2="358.6" y2="413" stroke="#e6e8ec" stroke-width="0.8"/>
<rect x="375" y="360" width="1.2" height="40" fill="#f4f4f4"/>
<path d="M372,359 h8 v4.5 h-8 l-1.5,-2.2z" fill="#1e88e0"/>
<rect x="277" y="409" width="32" height="1.2" fill="#f4f4f4"/>
<rect x="306.5" y="407" width="3" height="6" fill="#1e88e0"/>
<g fill="#aab" ><circle cx="283" cy="406" r="0.4"/><circle cx="290" cy="406" r="0.4"/><circle cx="297" cy="406" r="0.4"/><circle cx="304" cy="406" r="0.4"/></g>
</svg>
<div class="t" style="left:312px;top:407px;font-size:6px;color:#222;font-family:'Liberation Mono',monospace;letter-spacing:-0.3px">100mm/s</div>
<div class="t" style="left:365px;top:401px;font-size:6px;color:#222;font-family:'Liberation Mono',monospace;letter-spacing:-0.5px">10mm/s</div>
<div class="t" style="left:358px;top:408px;font-size:6.5px;color:#222">速度模式</div>
<div class="a" style="left:385.5px;top:347px;width:1px;height:68px;background:#555a66"></div>
<!-- status bar -->
<div class="a" style="left:0;top:414.5px;width:790px;height:10.5px;background:linear-gradient(#dcdfe5,#cdd1d8)"></div>
<div class="a" style="left:0;top:414.5px;width:790px;height:0.8px;background:#a6abb4"></div>
<div class="t" style="left:2px;top:416.5px;font-size:6.5px;color:#222">选择元素: 711 准备就绪</div>


<!-- ===== MEASUREMENT TOOLS ===== -->
<div class="a" style="left:386px;top:298.5px;width:127px;height:1px;background:#7d828c"></div>
<div class="a" style="left:386px;top:299.5px;width:127px;height:7.5px;background:linear-gradient(#e8ebef,#d5d9df)"></div>
<div class="t" style="left:388px;top:300px;font-size:6.5px;color:#222">测量工具</div>
<svg class="a" style="left:506.0px;top:301.0px" width="7" height="6" viewBox="0 0 7 6"><path d="M1.8,1.2 V0.6 H6.4 V4 H5.6" fill="none" stroke="#4a5566" stroke-width="1.1"/><rect x="0.6" y="2" width="4.6" height="3.4" fill="none" stroke="#4a5566" stroke-width="1.1"/><rect x="0.6" y="1.6" width="4.6" height="1" fill="#4a5566"/></svg>
<div class="a" style="left:386px;top:307px;width:127px;height:60px;background:#bcc1cc"></div>
<svg class="a" style="left:386px;top:307px" width="127" height="60" viewBox="386 307 127 60" fill="none" stroke="#1e88e0" stroke-width="1.1"><g transform="translate(386,306.8)"><circle cx="5" cy="5" r="1.6" fill="#1e88e0" stroke="none"/></g><g transform="translate(397.5,306.8)"><line x1="1" y1="9.5" x2="9" y2="0.5" stroke-width="1.4"/></g><g transform="translate(410,306.8)"><circle cx="5" cy="5" r="4.3" stroke-width="1.3"/></g><g transform="translate(422,306.8)"><path d="M3,0.5 A5,5 0 0 1 3,9.5" stroke-width="1.4"/></g><g transform="translate(434,306.8)"><ellipse cx="5" cy="5" rx="5" ry="2.6" stroke-width="1.2"/></g><g transform="translate(446,306.8)"><rect x="1" y="2.5" width="8" height="5" stroke-width="1.1"/></g><g transform="translate(458,306.8)"><rect x="-0.5" y="1.5" width="11" height="7" rx="3.5" stroke-width="1.2"/></g><g transform="translate(470,306.8)"><circle cx="5" cy="5" r="4" stroke-width="2"/><circle cx="5" cy="5" r="1.4" stroke-width="1"/></g><g transform="translate(482,306.8)"><path d="M0,8 C2,-1 4,-1 5,5 C6,10 8,9 10,3" stroke-width="1.2"/></g><g transform="translate(494,306.8)"><path d="M1.5,8.5 C-1,7 0.5,3.5 3,4 C3,0.5 8,0.5 8.5,4 C11,3.5 11,8.5 8.5,8.5 Z" stroke-width="1.1"/></g><g transform="translate(386,318.5)"><g stroke="none" fill="#6aa8e0"><circle cx="2" cy="3" r="0.7"/><circle cx="5" cy="2" r="0.7"/><circle cx="8" cy="4" r="0.7"/><circle cx="3" cy="7" r="0.7"/><circle cx="7" cy="8" r="0.7"/><circle cx="5" cy="5" r="0.7"/></g></g><g transform="translate(398,318.5)"><path d="M2,1 h5 M4.5,1 v7 M1,9 h8 v-2" stroke-width="1.5"/></g><g transform="translate(410,318.5)"><path d="M1,5 l4,-3 l4,3 l-4,3z" fill="#fff" stroke="#5a8ac8" stroke-width="0.8"/><path d="M5,2 v6" stroke="#5a8ac8" stroke-width="0.6"/></g><g transform="translate(422,318.5)"><circle cx="5" cy="5" r="4.3" fill="#3a9ae8" stroke="#1a70c0" stroke-width="0.6"/><path d="M1,5 h8" stroke="#8ac8f8" stroke-width="0.5"/></g><g transform="translate(434,318.5)"><path d="M0.5,9 l4.5,-8 l4.5,8z" fill="#48a8ee" stroke="none"/></g><g transform="translate(446,318.5)"><rect x="2" y="0" width="6" height="10" rx="2.5" fill="#48a8ee" stroke="#1a70c0" stroke-width="0.5"/></g><g transform="translate(458,318.5)"><circle cx="5" cy="5" r="1.4" fill="#a0a4aa" stroke="none"/></g><line x1="386" y1="336.5" x2="513" y2="336.5" stroke="#6d727c" stroke-width="1"/><g stroke="#e4e6ea" stroke-width="1"><g transform="translate(386,337.4)"><path d="M0.5,5 h9 M5,0.5 v9"/></g><g transform="translate(399,337.4)"><path d="M0.5,5 h9 M5,0.5 v9"/></g><g transform="translate(409,337.4)"><rect x="1" y="1" width="8" height="8" stroke-dasharray="1.2 1"/><circle cx="5" cy="5" r="1"/></g><g transform="translate(422,337.4)"><line x1="1" y1="9" x2="9" y2="1"/></g><g transform="translate(434,337.4)"><rect x="1.5" y="0.5" width="7" height="9"/><path d="M1.5,4 h7"/></g><g transform="translate(446,337.4)"><path d="M1,1 v8 h6 M3,3 h3 M8,8 l2,1"/></g><g transform="translate(458,337.4)"><rect x="1" y="2" width="8" height="6"/><path d="M3,0.5 h6 v5"/></g><g transform="translate(470,337.4)"><circle cx="5" cy="5" r="4.5"/><circle cx="5" cy="5" r="1.6"/></g><g transform="translate(482,337.4)"><path d="M0.5,1 h9 l-3,4 v4 h-3 v-4z"/></g><g transform="translate(494,337.4)"><path d="M3,0.5 A5,5 0 0 1 3,9.5"/></g><g transform="translate(386,349.8)"><path d="M3,0.5 A5,5 0 0 1 3,9.5"/></g></g></svg><div class="a" style="left:386px;top:297.5px;width:127px;height:1px;background:#6a6f7a"></div>
<!-- ===== CAD TABS ROW ===== -->
<div class="a" style="left:514.5px;top:297px;width:275.5px;height:10.5px;background:#bcc1cc"></div>
<div class="tab" style="left:516px;top:298.3px;width:19px;height:9.1px;background:#e2e5ea;line-height:9px;border-bottom:1px solid #8c919c;">3D视图</div><div class="tab" style="left:535px;top:298.3px;width:24px;height:9.1px;background:#e2e5ea;line-height:9px;border-bottom:1px solid #8c919c;">平板视图</div><div class="tab" style="left:559px;top:298.3px;width:24.5px;height:9.1px;background:#e2e5ea;line-height:9px;border-bottom:1px solid #8c919c;">拼接视图</div><div class="tab on" style="left:584px;top:297.5px;width:18px;height:9.8px;background:#eef0f3;line-height:9px;">CAD…</div><div class="tab" style="left:603px;top:298.3px;width:24.5px;height:9.1px;background:#e2e5ea;line-height:9px;border-bottom:1px solid #8c919c;">渲染视图</div><div class="tab" style="left:628px;top:298.3px;width:24px;height:9.1px;background:#e2e5ea;line-height:9px;border-bottom:1px solid #8c919c;">工件…</div><div class="tab" style="left:652.3px;top:298.3px;width:24.700000000000045px;height:9.1px;background:#e2e5ea;line-height:9px;border-bottom:1px solid #8c919c;">轮廓…</div><div class="tab" style="left:677px;top:298.3px;width:23.700000000000045px;height:9.1px;background:#e2e5ea;line-height:9px;border-bottom:1px solid #8c919c;">点列…</div><div class="tab" style="left:701px;top:298.3px;width:19.600000000000023px;height:9.1px;background:#e2e5ea;line-height:9px;border-bottom:1px solid #8c919c;">QM-3D</div><div class="tab" style="left:721px;top:298.3px;width:24.299999999999955px;height:9.1px;background:#e2e5ea;line-height:9px;border-bottom:1px solid #8c919c;">扫描视图</div><div class="tab" style="left:745.3px;top:298.3px;width:24.700000000000045px;height:9.1px;background:#e2e5ea;line-height:9px;border-bottom:1px solid #8c919c;">形状…</div><div class="tab" style="left:770px;top:298.3px;width:8px;height:9.1px;background:#e2e5ea;line-height:9px;border-bottom:1px solid #8c919c;">合</div>
<div class="t" style="left:780px;top:299px;font-size:7px;color:#999">◀</div>
<div class="t" style="left:784px;top:299px;font-size:7px;color:#111">▶</div>
<!-- ===== CONSTRUCTION TOOLS ===== -->
<div class="a" style="left:514.5px;top:307.5px;width:275.5px;height:8.5px;background:linear-gradient(#e8ebef,#d5d9df)"></div>
<div class="t" style="left:517px;top:308.5px;font-size:6.5px;color:#222">构造工具</div>
<div class="t" style="left:783px;top:307px;font-size:7px;color:#333;font-weight:bold">⊓</div>
<div class="a" style="left:514.5px;top:316px;width:275.5px;height:51px;background:#bcc1cc"></div>
<svg class="a" style="left:514px;top:316px" width="276" height="51" viewBox="514 316 276 51" fill="none" stroke="#1e88e0" stroke-width="1.1"><g transform="translate(515.6,316.8)"><circle cx="5" cy="5" r="1.6" fill="#1e88e0" stroke="none"/></g><g transform="translate(527.0,316.8)"><line x1="1" y1="9.5" x2="9" y2="0.5" stroke-width="1.4"/></g><g transform="translate(539.4,316.8)"><circle cx="5" cy="5" r="4.3" stroke-width="1.3"/></g><g transform="translate(551.0,316.8)"><path d="M3,0.5 A5,5 0 0 1 3,9.5" stroke-width="1.4"/></g><g transform="translate(563.5,316.8)"><ellipse cx="5" cy="5" rx="5" ry="2.8" stroke-width="1.2"/></g><g transform="translate(575.0,316.8)"><circle cx="5" cy="5" r="4" stroke-width="2"/><circle cx="5" cy="5" r="1.4" stroke-width="1"/></g><g transform="translate(586.5,316.8)"><path d="M0.5,8 h9 M0.5,5 v5 M9.5,5 v5 M2,2 l3,2" stroke-width="1"/></g><g transform="translate(599.0,316.8)"><path d="M0.5,9 l5,-8 l4,8z" stroke-width="1"/></g><g transform="translate(610.0,316.8)"><path d="M1,1 h8 M5,1 v8 M1,9 h8" stroke-width="1.2"/></g><g transform="translate(622.0,316.8)"><path d="M0.5,8 l2,-6 l2,5 l2,-6 l3,3" stroke-width="1.1"/></g><g transform="translate(635.0,316.8)"><path d="M1.5,8.5 C-1,7 0.5,3.5 3,4 C3,0.5 8,0.5 8.5,4 C11,3.5 11,8.5 8.5,8.5 Z" stroke-width="1"/></g><g transform="translate(647.0,316.8)"><path d="M0.5,5 l5,-3 l4,3 l-4,3z" fill="#fff" stroke="#5a8ac8" stroke-width="0.8"/><path d="M1,6 l4.5,3 l4,-3" stroke="#5a8ac8" stroke-width="0.8"/></g><g transform="translate(658.0,316.8)"><path d="M1,2 a7,7 0 0 1 8,7 M1,5 a4,4 0 0 1 5,4" stroke-width="1.5"/></g><g transform="translate(671.0,316.8)"><rect x="0.5" y="2" width="9" height="6" stroke-width="1.1"/></g><g transform="translate(683.0,316.8)"><circle cx="5" cy="5" r="4.3" fill="#3a9ae8" stroke="#1a70c0" stroke-width="0.6"/></g><g transform="translate(695.0,316.8)"><path d="M0.5,9 l4.5,-8 l4.5,8z" fill="#48a8ee" stroke="none"/></g><g transform="translate(707.0,316.8)"><rect x="2" y="0" width="6" height="10" rx="2.5" fill="#48a8ee" stroke="#1a70c0" stroke-width="0.5"/></g><g transform="translate(718.5,316.8)"><rect x="0" y="2" width="10" height="6" rx="3" stroke-width="1.1"/></g><g transform="translate(731.0,316.8)"><rect x="1" y="0.5" width="8" height="9" stroke-width="1"/><rect x="2.5" y="2" width="5" height="2.5" fill="#1e88e0" stroke="none"/></g><g transform="translate(742.6,316.8)"><path d="M2,1 v8 h7" stroke="#d03030" stroke-width="0.9"/><path d="M2,9 l5,-5" stroke="#e0b020" stroke-width="0.9"/><circle cx="2" cy="1.5" r="1" fill="#1e88e0" stroke="none"/></g><g transform="translate(754.0,316.8)"><path d="M2,1 v8 h7" stroke="#d03030" stroke-width="0.9"/><path d="M2,9 l5,-5" stroke="#e0b020" stroke-width="0.9"/><circle cx="2" cy="1.5" r="1" fill="#1e88e0" stroke="none"/></g><g transform="translate(766.0,316.8)"><path d="M1,1 l8,8" stroke="#1e88e0" stroke-width="0.9"/><path d="M1,9 l5,-5" stroke="#e0b020" stroke-width="0.9"/><circle cx="9" cy="2" r="1" fill="#d03030" stroke="none"/></g><g transform="translate(778.0,316.8)"><path d="M1,1 l8,8" stroke="#d03030" stroke-width="0.9"/><path d="M1,9 l5,-5" stroke="#e0b020" stroke-width="0.9"/><circle cx="9" cy="2" r="1" fill="#1e88e0" stroke="none"/></g><g transform="translate(515.6,328.2)"><rect x="1" y="1" width="8" height="8" fill="#f0d060" stroke="#1e88e0" stroke-width="0.8"/><circle cx="4" cy="1.5" r="1.5" fill="#e0a020" stroke="none"/></g><g transform="translate(527.0,328.2)"><path d="M0.5,5 h9 M5,0.5 v9" stroke-width="2"/></g><g transform="translate(538.7,328.2)"><path d="M2,4 l3,-3 l3,3 l-3,3z M5,7 v3 M2,9 h6" stroke-width="1"/></g><g transform="translate(551.0,328.2)"><path d="M0,3 h4 v4 h-4z" fill="#e0b020" stroke="none"/><path d="M5,1 v8 M5,5 h5" stroke-width="1.1"/></g><g transform="translate(563.5,328.2)"><rect x="0.5" y="0.5" width="9" height="9" stroke-width="1"/><rect x="1.5" y="1.5" width="4" height="4" fill="#fff" stroke="none"/></g><g transform="translate(575.0,328.2)"><path d="M1,1 h8 M5,1 v4 M1,9 h8 v-3 M1,6 v3" stroke-width="1.1"/></g><g transform="translate(587.0,328.2)"><path d="M0.5,8 A4.5,4.5 0 0 1 9.5,8" stroke-width="1.2"/></g><g transform="translate(599.0,328.2)"><path d="M0.5,7 A4.5,4.5 0 0 1 9.5,7 z" stroke-width="1.2"/></g><g transform="translate(610.7,328.2)"><circle cx="5" cy="5" r="3.8" stroke="#a8b8c8" stroke-dasharray="1 1"/></g></svg>
<div class="a" style="left:594px;top:309.8px;width:36px;height:8px;background:#4a4d52;border:1px solid #777"></div>
<div class="t" style="left:596px;top:310.6px;font-size:6px;color:#ddd">CAD视图窗口</div>
<div class="a" style="left:514.5px;top:356.5px;width:275.5px;height:10.5px;background:#bcc1cc"></div><div class="a" style="left:516px;top:354.5px;width:274px;height:1px;background:#a3a8b2"></div>
<div class="a" style="left:514.5px;top:366px;width:275.5px;height:1px;background:#8c919c"></div>
<div class="tab on" style="left:516px;top:356.8px;width:27px;height:9.7px;border-bottom:1px solid #8c919c">构造二维</div>
<div class="tab" style="left:543px;top:356.8px;width:27px;height:9.7px;background:#eef0f3;border-bottom:1px solid #8c919c">快速构造</div>
<div class="tab" style="left:570px;top:356.8px;width:27px;height:9.7px;background:#eef0f3;border-bottom:1px solid #8c919c">位置公差</div>
<!-- ===== TRAJECTORY PANEL ===== -->
<div class="a" style="left:386px;top:367px;width:404px;height:8px;background:linear-gradient(#e3e6eb,#d3d7de)"></div>
<div class="a" style="left:386px;top:367.5px;width:33px;height:7px;background:#edf0f3"></div>
<div class="t" style="left:388px;top:367.5px;font-size:6.5px;color:#222">轨迹产线回</div>
<div class="t" style="left:782px;top:366.5px;font-size:7px;color:#333;font-weight:bold">⊓</div>
<div class="a" style="left:386px;top:375px;width:404px;height:13px;background:linear-gradient(#d8dbe1,#c8ccd3)"></div>
<svg class="a" style="left:386px;top:375px" width="70" height="13" viewBox="386 375 70 13">
<path d="M390.5,377 L397.5,381.5 L390.5,386 Z" fill="#1a8de8" stroke="#0d6ab8" stroke-width="0.6"/>
<path d="M399.5,377 L407.5,386 M407.5,377 L399.5,386" stroke="#e02020" stroke-width="1.5"/>
</svg>
<div class="a" style="left:409px;top:376.5px;width:45px;height:9.5px;background:#eceef1;border:1px solid #b8bcc4"></div>
<div class="t" style="left:411px;top:378.5px;font-size:6.5px;color:#222">SS2D视像1</div>
<div class="t" style="left:447px;top:377.5px;font-size:6px;color:#666">⌄</div>
<div class="a" style="left:386px;top:388px;width:404px;height:26.5px;background:#292929"></div>
<div class="t" style="left:571px;top:391px;font-size:7px;color:#f2f2f2">实时轮廓线</div>
<div class="a" style="left:404px;top:403.2px;width:374px;height:3.8px;background:#9a9a9a;border-top:1px solid #c4c4c4"></div>
<div class="a" style="left:404px;top:401.5px;width:1px;height:6px;background:#e0e0e0"></div>
<div class="a" style="left:497.5px;top:401.5px;width:1px;height:6px;background:#e0e0e0"></div>
<div class="a" style="left:591.5px;top:401.5px;width:1px;height:6px;background:#e0e0e0"></div>
<div class="a" style="left:684.5px;top:401.5px;width:1px;height:6px;background:#e0e0e0"></div>
<div class="a" style="left:777.5px;top:401.5px;width:1px;height:6px;background:#e0e0e0"></div>
<div class="t" style="left:395px;top:401.5px;font-size:6px;color:#aaa">···</div>
<div class="t" style="left:402px;top:408.5px;font-size:6px;color:#888">··</div>
<div class="t" style="left:495px;top:408.5px;font-size:6px;color:#888">···</div>
<div class="t" style="left:589px;top:408.5px;font-size:6px;color:#888">···</div>
<div class="t" style="left:682px;top:408.5px;font-size:6px;color:#888">···</div>
<div class="t" style="left:775px;top:408.5px;font-size:6px;color:#888">··</div>
<!-- status right -->
<div class="t" style="left:583px;top:416.5px;font-size:6.5px;color:#222;font-family:'Liberation Mono',monospace;letter-spacing:-0.7px">0day(s) 0:0:44.340/16:33--16:34</div>
<div class="t" style="left:684px;top:416.5px;font-size:6.5px;color:#222">程序执行次数: 0 / 1</div>
<div class="a" style="left:745px;top:415px;width:45px;height:10px;background:#b4b9c3;border-left:1px solid #9aa0aa"></div>
<div class="t" style="left:748px;top:416.5px;font-size:6.5px;color:#222">增强参数设置</div>

<div class="a" style="left:513.9px;top:95px;width:2.2px;height:272px;background:#68707c"></div>
</body></html>
